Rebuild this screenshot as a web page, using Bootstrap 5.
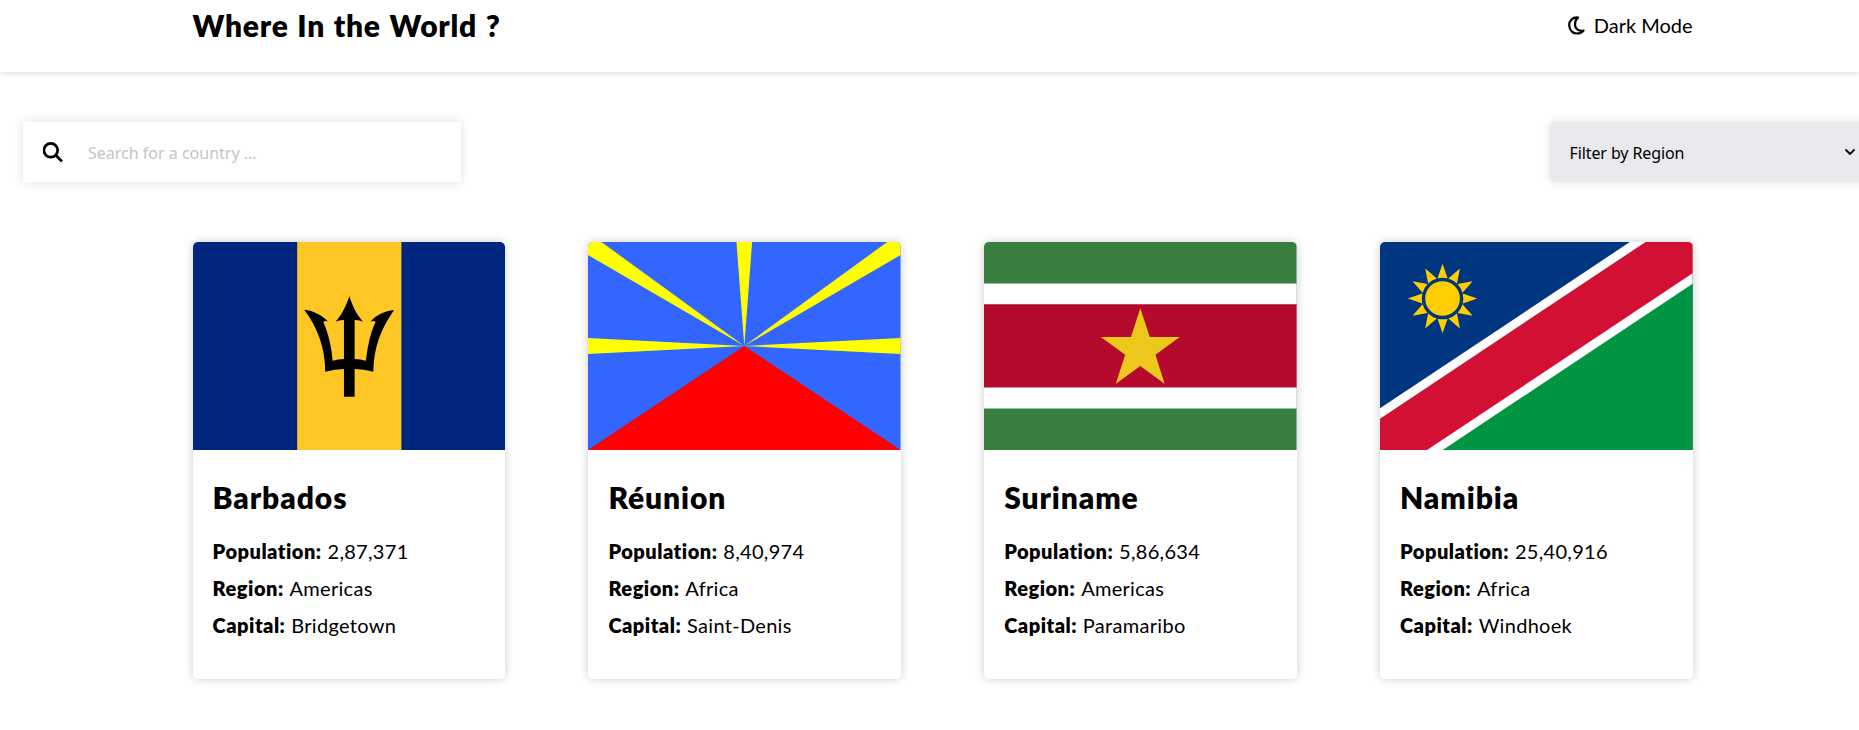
<!DOCTYPE html>
<html lang="en">
<head>
<meta charset="utf-8">
<title>Where In the World ?</title>
<link href="https://cdn.jsdelivr.net/npm/bootstrap@5.3.0/dist/css/bootstrap.min.css" rel="stylesheet">
<style>
body{font-family:Lato,"Open Sans",sans-serif;font-size:20px;color:#000;background:#fff;overflow:hidden;min-height:730px}
.wrap{width:1500px;margin-left:192.6px}
.topbar{height:72px;padding-top:3px;box-shadow:0 1px 6px rgba(0,0,0,.17)}
.site-title{font-size:30px;font-weight:800;line-height:44px;letter-spacing:.75px;word-spacing:1px}
.mode{line-height:44px}
.mode svg{margin-right:8.500px}
.tools{width:1860px;margin:50px 0 60px 23px}
.search-box{width:438px;height:60px;padding-left:20px;box-shadow:0 0 10px rgba(0,0,0,.13)}
.search-box input,.region-pick{font-family:"Noto Sans",sans-serif;font-size:16px}
.search-box input{width:320px;outline:0;background:none;padding:2px 0 0}
.search-box input::placeholder{color:#c4c4c4;opacity:1}
.region-pick{width:333px;height:60px;padding-left:19.500px;background:#e9e8ed;border-radius:5px;box-shadow:0 0 10px rgba(0,0,0,.13)}
.region-pick span{width:274.500px;padding-top:2px;letter-spacing:-.1px}
.nation{width:312.6px;height:437px;border-radius:5px;overflow:hidden;box-shadow:0 0 10px rgba(0,0,0,.2)}
.nation>svg{display:block;height:208px;width:100%}
.facts{padding:27px 20px 0}
.facts h2{font-size:30px;font-weight:800;line-height:40px;margin-bottom:21px;letter-spacing:.9px}
.facts p{line-height:27px;margin-bottom:10px;letter-spacing:.3px;word-spacing:.7px}
.facts b{font-weight:800;letter-spacing:.5px}
</style>
</head>
<body>
<header class="topbar">
<div class="wrap d-flex justify-content-between">
<h1 class="site-title mb-0">Where In the World ?</h1>
<div class="mode d-flex align-items-center"><svg width="17" height="19" viewBox="0 0 17 19"><path d="M10 1.500C4.500 1 1 5 1.200 9.500 1.500 15 5.500 17.500 9 17.500 12 17.500 14 16.500 15.500 14.500 11 15.500 7 13 7 8.500 7 5.500 8 3 10 1.500Z" fill="none" stroke="#000" stroke-width="2.200" stroke-linejoin="round"/></svg><span>Dark Mode</span></div>
</div>
</header>
<main>
<div class="tools d-flex justify-content-between">
<div class="search-box d-flex align-items-center"><svg width="21" height="21" viewBox="0.5 0 21 21" fill="none" stroke="#000" stroke-width="2.700"><circle cx="8.300" cy="8.300" r="6.900"/><path d="M13.300 13.300 19.500 19.500"/></svg><input class="border-0 ms-4" placeholder="Search for a country ..."></div>
<div class="region-pick d-flex align-items-center"><span>Filter by Region</span><svg width="12" height="8" viewBox="0 0 12 8"><path d="M1.500 1.500 6 6 10.500 1.500" fill="none" stroke="#000" stroke-width="1.800"/></svg></div>
</div>
<div class="wrap d-flex justify-content-between">
<article class="nation">
<svg viewBox="39 36 936 624" preserveAspectRatio="none"><path fill="#00267f" d="M39 36h936v624H39z"/><path fill="#ffc726" d="M351 36h312v624H351z"/><path d="M507 198C497 230 484 255 466 275Q478 269 491 270V387Q473 388 457 392C454 350 443 305 429 276Q436 271 444 275C425 255 400 242 372 239C410 290 435 350 435 425Q463 418 491 417V500H523V417Q551 418 579 425C580 350 603 295 641 240C612 243 587 256 570 275Q578 271 586 275C571 305 561 350 557 392Q541 388 523 387V270Q536 269 548 275C530 255 517 230 507 198Z"/></svg>
<div class="facts"><h2>Barbados</h2><p><b>Population: </b>2,87,371</p><p><b>Region: </b>Americas</p><p><b>Capital: </b>Bridgetown</p></div>
</article>
<article class="nation">
<svg viewBox="55 36 937 624" preserveAspectRatio="none"><path fill="#36f" d="M55 36h937v624H55z"/><path fill="red" d="M523.500 348 992 660H55z"/><path fill="#ff0" d="M523.500 348 55 324V372ZM523.500 348 55 75V36H95ZM523.500 348 500 36H547ZM523.500 348 952 36H992V75ZM523.500 348 992 324V372Z"/></svg>
<div class="facts"><h2>Réunion</h2><p><b>Population: </b>8,40,974</p><p><b>Region: </b>Africa</p><p><b>Capital: </b>Saint-Denis</p></div>
</article>
<article class="nation">
<svg viewBox="42 36 939 624" preserveAspectRatio="none"><path fill="#377e3f" d="M42 36h939v624H42z"/><path fill="#fff" d="M42 160.500h939v375H42z"/><path fill="#b40a2d" d="M42 223h939v249.500H42z"/><path fill="#ecc81d" d="M511.500 235 540 321H630L557 374 584.500 461 511.500 408 438 461 466 374 393 321H483.500Z"/></svg>
<div class="facts"><h2>Suriname</h2><p><b>Population: </b>5,86,634</p><p><b>Region: </b>Americas</p><p><b>Capital: </b>Paramaribo</p></div>
</article>
<article class="nation">
<svg viewBox="46 36 937 624" preserveAspectRatio="none"><path fill="#003580" d="M46 36h937v624H46z"/><path fill="#009543" d="M983 36V660H46z"/><path fill="#fff" d="M46 535 795 36H983V161L234 660H46z"/><path fill="#d21034" d="M46 566 842 36H983V130L187 660H46z"/><g fill="#ffce00" transform="translate(233.500 205.500)"><circle r="52"/><g id="rays"><path id="ray" d="M-15-60.500 0-104 15-60.500Q0-64-15-60.500Z"/><use href="#ray" transform="rotate(30)"/><use href="#ray" transform="rotate(60)"/></g><use href="#rays" transform="rotate(90)"/><use href="#rays" transform="rotate(180)"/><use href="#rays" transform="rotate(270)"/></g></svg>
<div class="facts"><h2>Namibia</h2><p><b>Population: </b>25,40,916</p><p><b>Region: </b>Africa</p><p><b>Capital: </b>Windhoek</p></div>
</article>
</div>
</main>
<script src="https://cdn.jsdelivr.net/npm/bootstrap@5.3.0/dist/js/bootstrap.bundle.min.js"></script>
</body>
</html>
